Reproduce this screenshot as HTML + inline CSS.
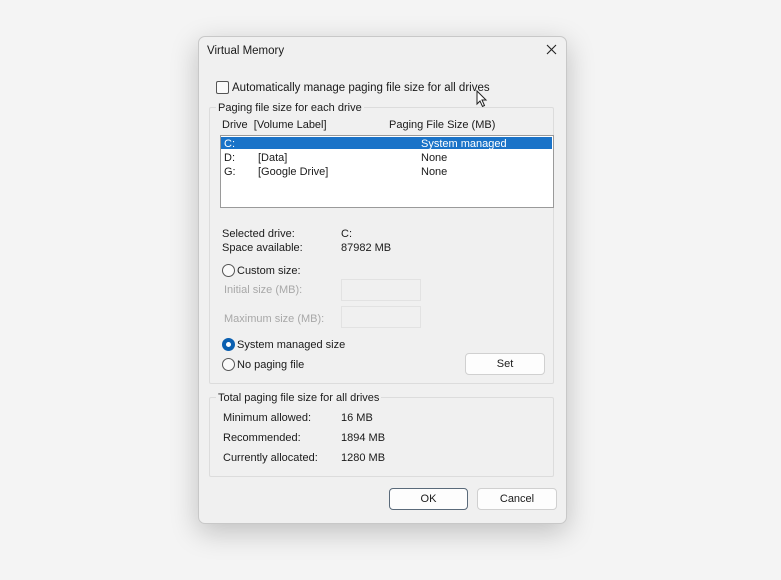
<!DOCTYPE html>
<html><head><style>
body{margin:0;width:781px;height:580px;background:#f4f4f4;position:relative;overflow:hidden;font-family:"Liberation Sans",sans-serif;font-size:11px;color:#1a1a1a}
.a{position:absolute;white-space:nowrap;line-height:14px}
div.a:not([style*="height"]){margin-top:1px}
.dlg{position:absolute;left:198px;top:36px;width:367px;height:486px;background:#f0f0f0;border:1px solid #c8c8c8;border-radius:7px;box-shadow:0 8px 28px rgba(0,0,0,.22)}
.grp{position:absolute;border:1px solid #dcdcdc;border-radius:2px}
.btn{position:absolute;background:#fdfdfd;border:1px solid #d0d0d0;border-radius:4px;text-align:center;line-height:21px}
.rad{position:absolute;width:11px;height:11px;border:1px solid #555;border-radius:50%;background:#fafafa}
.inp{position:absolute;border:1px solid #e2e2e2;background:#f0f0f0}
.g{color:#a8a8a8}
</style></head><body>
<div class="dlg"></div>
<div class="a" style="left:207px;top:43px;font-size:11.5px">Virtual Memory</div>
<svg class="a" style="left:546px;top:44px" width="11" height="11"><path d="M1 1L10 10M10 1L1 10" stroke="#222" stroke-width="1.1"/></svg>
<div class="a" style="left:216px;top:81px;width:11px;height:11px;border:1px solid #555;border-radius:2px;background:#fafafa"></div>
<div class="a" style="left:232px;top:80px;font-size:11.5px">Automatically manage paging file size for all drives</div>
<svg class="a" style="left:476px;top:90px" width="12" height="18"><path d="M1 1L1 14L4 11L6.5 16.5L8.5 15.5L6 10L10 10Z" fill="#fff" stroke="#222" stroke-width="1"/></svg>
<div class="grp" style="left:209px;top:107px;width:343px;height:275px"></div>
<div class="a" style="left:216px;top:100px;background:#f0f0f0;padding:0 2px">Paging file size for each drive</div>
<div class="a" style="left:222px;top:117px">Drive&nbsp; [Volume Label]</div>
<div class="a" style="left:389px;top:117px">Paging File Size (MB)</div>
<div class="a" style="left:220px;top:135px;width:332px;height:71px;background:#fff;border:1px solid #9a9a9a"></div>
<div class="a" style="left:221px;top:137px;width:331px;height:12px;background:#1a73c8"></div>
<div class="a" style="left:224px;top:136px;color:#fff">C:</div>
<div class="a" style="left:421px;top:136px;color:#fff">System managed</div>
<div class="a" style="left:224px;top:150px">D:</div><div class="a" style="left:258px;top:150px">[Data]</div><div class="a" style="left:421px;top:150px">None</div>
<div class="a" style="left:224px;top:164px">G:</div><div class="a" style="left:258px;top:164px">[Google Drive]</div><div class="a" style="left:421px;top:164px">None</div>
<div class="a" style="left:222px;top:226px">Selected drive:</div><div class="a" style="left:341px;top:226px">C:</div>
<div class="a" style="left:222px;top:240px">Space available:</div><div class="a" style="left:341px;top:240px">87982 MB</div>
<div class="rad" style="left:222px;top:264px"></div><div class="a" style="left:237px;top:263px">Custom size:</div>
<div class="a g" style="left:224px;top:282px">Initial size (MB):</div>
<div class="inp" style="left:341px;top:279px;width:78px;height:20px"></div>
<div class="a g" style="left:224px;top:311px">Maximum size (MB):</div>
<div class="inp" style="left:341px;top:306px;width:78px;height:20px"></div>
<div class="rad" style="left:222px;top:338px;background:#fff;border:4px solid #0a5fb0;width:5px;height:5px"></div><div class="a" style="left:237px;top:337px">System managed size</div>
<div class="rad" style="left:222px;top:358px"></div><div class="a" style="left:237px;top:357px">No paging file</div>
<div class="btn" style="left:465px;top:353px;width:78px;height:20px">Set</div>
<div class="grp" style="left:209px;top:397px;width:343px;height:78px"></div>
<div class="a" style="left:216px;top:390px;background:#f0f0f0;padding:0 2px">Total paging file size for all drives</div>
<div class="a" style="left:223px;top:410px">Minimum allowed:</div><div class="a" style="left:341px;top:410px">16 MB</div>
<div class="a" style="left:223px;top:430px">Recommended:</div><div class="a" style="left:341px;top:430px">1894 MB</div>
<div class="a" style="left:223px;top:450px">Currently allocated:</div><div class="a" style="left:341px;top:450px">1280 MB</div>
<div class="btn" style="left:389px;top:488px;width:77px;height:20px;border-color:#5a6a7a">OK</div>
<div class="btn" style="left:477px;top:488px;width:78px;height:20px">Cancel</div>
</body></html>
